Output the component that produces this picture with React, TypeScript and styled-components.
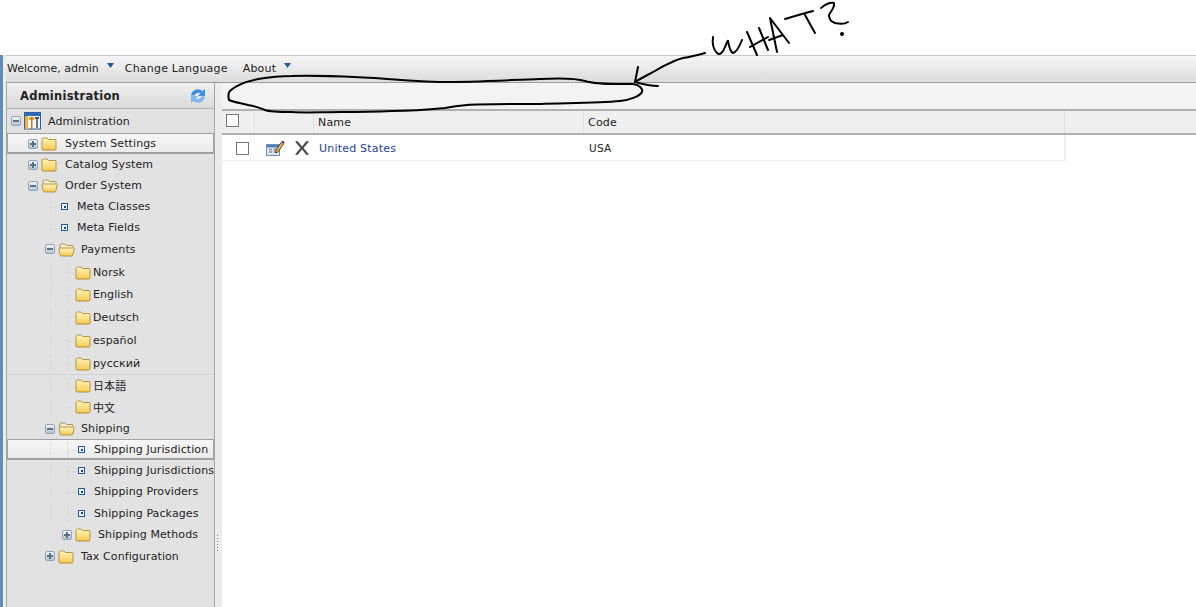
import React from 'react';
import styled, { createGlobalStyle } from 'styled-components';

const GlobalStyle = createGlobalStyle`
  html, body {
    margin: 0;
    padding: 0;
    background: #fff;
  }
  body {
    font-family: "DejaVu Sans", "Noto Sans CJK JP", sans-serif;
    font-size: 11px;
    color: #222;
  }
`;

type TreeRow = {
  label: string;
  height: number;
  textX: number;
  iconX: number;
  icon: 'admin' | 'open' | 'closed' | 'leaf';
  toggle?: 'plus' | 'minus';
  selected?: boolean;
  divider?: boolean;
  guides?: number[];
  stub?: number;
};

const treeRows: TreeRow[] = [
  { label: 'Administration', height: 24, textX: 48, iconX: 11, icon: 'admin', toggle: 'minus' },
  { label: 'System Settings', height: 21, textX: 65, iconX: 28, icon: 'closed', toggle: 'plus', selected: true },
  { label: 'Catalog System', height: 21, textX: 65, iconX: 28, icon: 'closed', toggle: 'plus' },
  { label: 'Order System', height: 21, textX: 65, iconX: 28, icon: 'open', toggle: 'minus' },
  { label: 'Meta Classes', height: 21, textX: 77, iconX: 61, icon: 'leaf', guides: [50], stub: 51 },
  { label: 'Meta Fields', height: 21, textX: 77, iconX: 61, icon: 'leaf', guides: [50], stub: 51 },
  { label: 'Payments', height: 22, textX: 81, iconX: 45, icon: 'open', toggle: 'minus' },
  { label: 'Norsk', height: 24, textX: 93, iconX: 75, icon: 'closed', guides: [50, 67], stub: 68 },
  { label: 'English', height: 21, textX: 93, iconX: 75, icon: 'closed', guides: [50, 67], stub: 68 },
  { label: 'Deutsch', height: 24, textX: 93, iconX: 75, icon: 'closed', guides: [50, 67], stub: 68 },
  { label: 'español', height: 23, textX: 93, iconX: 75, icon: 'closed', guides: [50, 67], stub: 68 },
  { label: 'русский', height: 23, textX: 93, iconX: 75, icon: 'closed', guides: [50, 67], stub: 68, divider: true },
  { label: '日本語', height: 20, textX: 93, iconX: 75, icon: 'closed', guides: [50, 67], stub: 68 },
  { label: '中文', height: 23, textX: 93, iconX: 75, icon: 'closed', guides: [50], stub: 68 },
  { label: 'Shipping', height: 21, textX: 81, iconX: 45, icon: 'open', toggle: 'minus' },
  { label: 'Shipping Jurisdiction', height: 21, textX: 94, iconX: 78, icon: 'leaf', guides: [50, 67], stub: 68, selected: true },
  { label: 'Shipping Jurisdictions', height: 21, textX: 94, iconX: 78, icon: 'leaf', guides: [50, 67], stub: 68 },
  { label: 'Shipping Providers', height: 21, textX: 94, iconX: 78, icon: 'leaf', guides: [50, 67], stub: 68 },
  { label: 'Shipping Packages', height: 22, textX: 94, iconX: 78, icon: 'leaf', guides: [50, 67], stub: 68 },
  { label: 'Shipping Methods', height: 21, textX: 98, iconX: 62, icon: 'closed', toggle: 'plus' },
  { label: 'Tax Configuration', height: 22, textX: 81, iconX: 45, icon: 'closed', toggle: 'plus' },
];

const ClosedFolder: React.FC = () => (
  <svg width="16" height="15" viewBox="0 0 16 15">
    <defs>
      <linearGradient id="folderFill" x1="0" y1="0" x2="0" y2="1">
        <stop offset="0" stopColor="#fff4b8" />
        <stop offset="1" stopColor="#f6cb52" />
      </linearGradient>
    </defs>
    <path d="M1 3.500 Q1 2 2.500 2 H6 L7.500 3.500 H14 Q15 3.500 15 4.500 V13 Q15 14 14 14 H2 Q1 14 1 13 Z" fill="url(#folderFill)" stroke="#b2934a" strokeWidth="1" />
    <path d="M2 13.500 H14.500" stroke="#d9a63c" strokeWidth="1" />
  </svg>
);

const OpenFolder: React.FC = () => (
  <svg width="17" height="15" viewBox="0 0 17 15">
    <defs>
      <linearGradient id="openFill" x1="0" y1="0" x2="0" y2="1">
        <stop offset="0" stopColor="#fff6c0" />
        <stop offset="1" stopColor="#f4c84e" />
      </linearGradient>
    </defs>
    <path d="M2 6 V3 Q2 2 3 2 H7 L8.500 3.500 H14 Q15 3.500 15 4.500 V6" fill="#f8f0d0" stroke="#b2934a" />
    <path d="M1 7 Q1 6 2 6 H15.500 Q16.500 6 16 7.500 L14.800 13 Q14.500 14 13.500 14 H3.500 Q2.500 14 2.200 13 Z" fill="url(#openFill)" stroke="#b2934a" />
  </svg>
);

const AdminIcon: React.FC = () => (
  <svg width="17" height="18" viewBox="0 0 17 18">
    <rect x="0.500" y="0.500" width="16" height="16.500" fill="#eef3fa" stroke="#2f5f9f" />
    <rect x="1" y="1" width="15" height="3" fill="#2f6bb5" />
    <rect x="1" y="4" width="3" height="13" fill="#f0b040" />
    <rect x="5" y="5" width="5" height="3" fill="#e8a020" />
    <rect x="7" y="5" width="1.500" height="12" fill="#b9821f" />
    <rect x="11" y="5" width="4" height="2" fill="#555" />
    <rect x="12" y="7" width="2" height="9" fill="#777" />
  </svg>
);

const RefreshIcon: React.FC = () => (
  <svg width="16" height="16" viewBox="0 0 16 16">
    <path d="M1 7.500 A7 7 0 0 1 12.500 3 L15 1 V8 H8 L10.500 5.500 A4 4 0 0 0 4.500 7.500 Z" fill="#3f8fe6" />
    <path d="M15 8.500 A7 7 0 0 1 3.500 13 L1 15 V8 H8 L5.500 10.500 A4 4 0 0 0 11.500 8.500 Z" fill="#7ab6f0" />
  </svg>
);

const EditIcon: React.FC = () => (
  <svg width="19" height="17" viewBox="0 0 19 17">
    <rect x="0.500" y="4.500" width="13" height="11" fill="#dce7f4" stroke="#6b8fb8" />
    <rect x="1" y="5" width="12" height="2.500" fill="#4f7fbb" />
    <path d="M3 9.500 H6 M7.500 9.500 H10.500 M3 12 H6 M7.500 12 H10.500" stroke="#8a8a8a" strokeWidth="1.500" />
    <path d="M9.500 13 L10 10 L15.500 2 L18 3.500 L12 12 Z" fill="#e3b73f" stroke="#3a3320" strokeWidth="0.800" />
    <path d="M15.500 2 L16.500 0.500 L18.500 2 L18 3.500 Z" fill="#6a2a78" />
  </svg>
);

const DeleteIcon: React.FC = () => (
  <svg width="14" height="14" viewBox="0 0 14 14">
    <path d="M0 0.500 L2.500 0 L7 5.500 L11.500 0 L14 0.500 L8.500 7 L14 13.500 L11.500 14 L7 8.500 L2.500 14 L0 13.500 L5.500 7 Z" fill="#4a4a4a" />
  </svg>
);

const Caret: React.FC = () => (
  <svg width="7" height="5" viewBox="0 0 7 5">
    <path d="M0 0 H7 L3.500 5 Z" fill="#1f5a94" />
  </svg>
);

const Annotation: React.FC = () => (
  <Scribble viewBox="0 0 1196 607" width="1196" height="607">
    <g fill="none" stroke="#000" strokeWidth="2" strokeLinecap="round" strokeLinejoin="round">
      <path d="M229 100 C228 96 228 92 231 90 C238 84 248 81 258 79 C270 77 280 76 292 76 C320 75 350 77 375 78 C400 80 425 82 445 82 C470 82 510 80 540 79 C560 78 575 78 585 81 C597 85 615 84 633 84 C640 85 643 89 642 92 C640 96 630 100 620 101 C600 103 573 103 540 104 C510 104 480 104 467 105 C455 106 450 107 445 108 C425 110 400 111 392 111 C370 112 350 112 342 112 C320 112 305 113 292 112 C280 112 270 112 265 110 C258 107 255 106 248 105 C240 103 233 102 229 100 Z" />
      <path d="M705 53 C698 55 690 57 683 58 C675 60 668 64 660 68 C652 73 643 77 635 82" />
      <path d="M638 67 L635 82 C642 84 650 86 658 86" />
      <path d="M713 37 C712 44 714 50 717 53 C720 56 723 52 725 47 C727 42 728 40 728 41 C729 46 730 52 733 53 C737 52 740 45 742 40" />
      <path d="M747 32 L757 55 M750 47 L768 37 M759 28 L768 50" />
      <path d="M777 52 L770 18 L789 43 M769 40 L783 35" />
      <path d="M785 19 C795 16 805 13 813 11 M805 15 L815 33" />
      <path d="M821 8 C826 4 830 2 834 3 C835 8 830 12 829 15 C829 20 832 22 835 23 C840 24 845 24 848 22" />
    </g>
    <circle cx="842" cy="34" r="2" fill="#000" />
  </Scribble>
);

const App: React.FC = () => (
  <Page>
    <GlobalStyle />
    <MenuBar>
      <MenuItem $spacing={0}>Welcome, admin</MenuItem>
      <CaretSlot><Caret /></CaretSlot>
      <MenuItem $gap={11}>Change Language</MenuItem>
      <MenuItem $gap={15}>About</MenuItem>
      <CaretSlot><Caret /></CaretSlot>
    </MenuBar>
    <Body>
      <EdgeStripe />
      <Sidebar>
        <SidebarHeader>
          <SidebarTitle>Administration</SidebarTitle>
          <RefreshIcon />
        </SidebarHeader>
        <Tree>
          {treeRows.map((row) => (
            <Row key={row.label} $height={row.height} $selected={row.selected} $divider={row.divider}>
              {row.guides?.map((x) => <VGuide key={x} $x={x} />)}
              {row.stub !== undefined && <HGuide $x={row.stub} $w={row.iconX - row.stub - 1} />}
              <Lead $textX={row.textX} $iconX={row.iconX}>
                {row.toggle && <Toggle $open={row.toggle === 'minus'} />}
                {row.icon === 'admin' && <AdminIcon />}
                {row.icon === 'open' && <OpenFolder />}
                {row.icon === 'closed' && <ClosedFolder />}
                {row.icon === 'leaf' && <Bullet />}
              </Lead>
              <RowLabel>{row.label}</RowLabel>
            </Row>
          ))}
        </Tree>
      </Sidebar>
      <Splitter><Grip /></Splitter>
      <Main>
        <Toolbar />
        <GridHeader>
          <CheckHeader><CheckBox /></CheckHeader>
          <HeaderCell $width={59} />
          <HeaderCell $width={270}>Name</HeaderCell>
          <HeaderCell $width={481}>Code</HeaderCell>
        </GridHeader>
        <DataRow>
          <CheckCell><CheckBox /></CheckCell>
          <ActionCell>
            <EditIcon />
            <DeleteIcon />
          </ActionCell>
          <NameCell><CountryLink href="#">United States</CountryLink></NameCell>
          <CodeCell>USA</CodeCell>
        </DataRow>
      </Main>
    </Body>
    <Annotation />
  </Page>
);

const Page = styled.div`
  position: relative;
  width: 1196px;
  height: 607px;
  padding-top: 55px;
  box-sizing: border-box;
  overflow: hidden;
  display: flex;
  flex-direction: column;
`;

const Scribble = styled.svg`
  position: absolute;
  left: 0;
  top: 0;
  pointer-events: none;
`;

const MenuBar = styled.div`
  height: 27px;
  box-sizing: border-box;
  display: flex;
  align-items: center;
  padding: 0 0 2px 7px;
  border-top: 1px solid #c8c8c8;
  background: linear-gradient(#f5f5f5, #dcdcdc);
  flex-shrink: 0;
`;

const MenuItem = styled.span<{ $gap?: number; $spacing?: number }>`
  margin-left: ${(p) => p.$gap ?? 0}px;
  letter-spacing: ${(p) => p.$spacing ?? 0.2}px;
  white-space: nowrap;
`;

const CaretSlot = styled.span`
  display: flex;
  margin-left: 8px;
  margin-top: -6px;
`;

const Body = styled.div`
  flex: 1;
  min-height: 0;
  display: flex;
  border-top: 1px solid #9c9c9c;
`;

const EdgeStripe = styled.div`
  width: 3px;
  margin-right: 3px;
  margin-top: -28px;
  background: #5f8fb8;
  box-shadow: 3px 0 0 #ececec;
  flex-shrink: 0;
`;

const Sidebar = styled.div`
  width: 209px;
  box-sizing: border-box;
  flex-shrink: 0;
  display: flex;
  flex-direction: column;
  background: #e2e2e2;
  border-left: 1px solid #a6a6a6;
  border-right: 1px solid #a6a6a6;
  overflow: hidden;
`;

const SidebarHeader = styled.div`
  height: 26px;
  box-sizing: border-box;
  display: flex;
  align-items: center;
  justify-content: space-between;
  padding: 0 8px 0 13px;
  background: linear-gradient(#f0f0f0, #dadada);
  border-bottom: 1px solid #b4b4b4;
  flex-shrink: 0;
`;

const SidebarTitle = styled.span`
  font-weight: bold;
  font-size: 11.5px;
  letter-spacing: 0.25px;
`;

const Tree = styled.div`
  display: flex;
  flex-direction: column;
  margin-left: -7px;
`;

const Row = styled.div<{ $height: number; $selected?: boolean; $divider?: boolean }>`
  position: relative;
  height: ${(p) => p.$height}px;
  box-sizing: border-box;
  display: flex;
  align-items: center;
  white-space: nowrap;
  ${(p) => p.$selected && `
    background: linear-gradient(#f7f7f7, #e9e9e9);
    &::before {
      content: '';
      position: absolute;
      inset: 0 0 0 7px;
      border: 1px solid #a0a0a0;
      border-bottom-width: 2px;
    }
  `}
  ${(p) => p.$divider && 'border-bottom: 1px solid #d2d2d2;'}
`;

const VGuide = styled.i<{ $x: number }>`
  position: absolute;
  left: ${(p) => p.$x}px;
  top: 3px;
  bottom: 3px;
  border-left: 1px dotted #d0d0d0;
`;

const HGuide = styled.i<{ $x: number; $w: number }>`
  position: absolute;
  left: ${(p) => p.$x}px;
  top: 50%;
  width: ${(p) => p.$w}px;
  border-top: 1px dotted #d0d0d0;
`;

const Lead = styled.span<{ $textX: number; $iconX: number }>`
  width: ${(p) => p.$textX}px;
  box-sizing: border-box;
  padding-left: ${(p) => p.$iconX}px;
  display: flex;
  align-items: center;
  flex-shrink: 0;
`;

const RowLabel = styled.span`
  letter-spacing: 0.1px;
`;

const Toggle = styled.span<{ $open: boolean }>`
  position: relative;
  width: 10px;
  height: 10px;
  margin-right: 3px;
  box-sizing: border-box;
  border: 1px solid #8fa3b8;
  border-radius: 2px;
  background: linear-gradient(#f2f5f8, #b4c2d0);
  flex-shrink: 0;
  &::before {
    content: '';
    position: absolute;
    left: 1px;
    right: 1px;
    top: 3px;
    height: 2px;
    background: #5c6f84;
  }
  ${(p) => !p.$open && `
    &::after {
      content: '';
      position: absolute;
      top: 1px;
      bottom: 1px;
      left: 3px;
      width: 2px;
      background: #5c6f84;
    }
  `}
`;

const Bullet = styled.span`
  position: relative;
  width: 7px;
  height: 7px;
  box-sizing: border-box;
  border: 1px solid #1f5a9e;
  background: #eef4fa;
  &::after {
    content: '';
    position: absolute;
    left: 1.500px;
    top: 1.500px;
    width: 2px;
    height: 2px;
    background: #17477a;
  }
`;

const Splitter = styled.div`
  width: 7px;
  flex-shrink: 0;
  background: #ececec;
  display: flex;
  align-items: flex-end;
  padding: 0 0 56px 1px;
  box-sizing: border-box;
`;

const Grip = styled.span`
  width: 3px;
  height: 17px;
  background-image: radial-gradient(#777 0.7px, transparent 0.8px);
  background-size: 3px 3px;
`;

const Main = styled.div`
  flex: 1;
  min-width: 0;
  display: flex;
  flex-direction: column;
  background: #fff;
`;

const Toolbar = styled.div`
  height: 26px;
  background: #f3f3f3;
  flex-shrink: 0;
`;

const GridHeader = styled.div`
  height: 26px;
  box-sizing: border-box;
  display: flex;
  background: #efefef;
  border-top: 2px solid #b0b0b0;
  border-bottom: 2px solid #b0b0b0;
  flex-shrink: 0;
`;

const HeaderCell = styled.div<{ $width: number }>`
  width: ${(p) => p.$width}px;
  box-sizing: border-box;
  display: flex;
  align-items: center;
  padding: 1px 0 0 4px;
  border-right: 1px solid #e0e0e0;
  letter-spacing: 0.2px;
`;

const CheckHeader = styled.div`
  width: 33px;
  box-sizing: border-box;
  padding: 3px 0 0 4px;
  border-right: 1px solid #e0e0e0;
`;

const CheckBox = styled.span`
  display: block;
  width: 13px;
  height: 13px;
  box-sizing: border-box;
  border: 1px solid #777;
  background: #fff;
`;

const DataRow = styled.div`
  width: 844px;
  height: 26px;
  padding-top: 1px;
  box-sizing: border-box;
  display: flex;
  align-items: center;
  border-bottom: 1px solid #eee;
  border-right: 2px solid #eee;
  flex-shrink: 0;
`;

const CheckCell = styled.div`
  width: 44px;
  padding-left: 14px;
  box-sizing: border-box;
`;

const ActionCell = styled.div`
  width: 53px;
  display: flex;
  align-items: center;
  gap: 10px;
`;

const NameCell = styled.div`
  width: 270px;
`;

const CodeCell = styled.div`
  font-size: 10.5px;
  letter-spacing: 0.2px;
`;

const CountryLink = styled.a`
  color: #1b3f9b;
  text-decoration: none;
  letter-spacing: 0.2px;
`;

export default App;
